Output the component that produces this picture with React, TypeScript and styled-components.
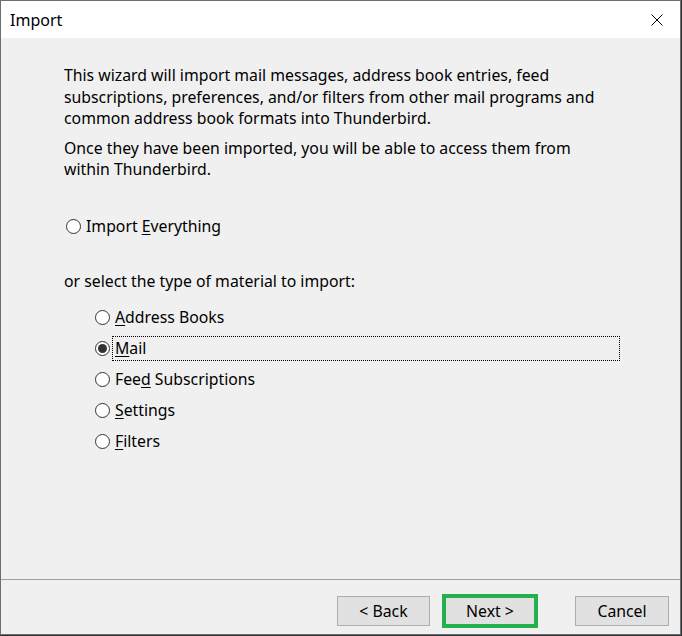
import React from "react";
import styled, { createGlobalStyle } from "styled-components";

const Global = createGlobalStyle`
  html, body { margin: 0; padding: 0; background: #2e3136; }
  body { font-family: "Noto Sans", "Open Sans", sans-serif; }
  * { box-sizing: border-box; }
`;

const Window = styled.div`
  width: 681px;
  height: 635px;
  border: 1px solid #6e6e6e;
  background: #f0f0f0;
  display: flex;
  flex-direction: column;
  color: #000;
  font-size: 15.8px;
`;

const TitleBar = styled.div`
  height: 37px;
  background: #fff;
  display: flex;
  align-items: center;
  justify-content: space-between;
  padding-left: 9px;
  flex-shrink: 0;
`;

const Title = styled.span`
  font-size: 16px;
`;

const CloseButton = styled.div`
  width: 46px;
  height: 37px;
  display: flex;
  align-items: center;
  justify-content: center;
`;

const Content = styled.div`
  flex: 1;
  padding: 27px 60px 0 63px;
  display: flex;
  flex-direction: column;
`;

const Para = styled.p<{ $gap?: number }>`
  margin: 0 0 ${(p) => p.$gap ?? 0}px 0;
  line-height: 21.5px;
`;

const Row = styled.div<{ $indent?: number; $mt?: number }>`
  display: flex;
  align-items: center;
  height: 25px;
  margin-left: ${(p) => p.$indent ?? 0}px;
  margin-top: ${(p) => p.$mt ?? 0}px;
`;

const Radio = styled.span<{ $checked?: boolean }>`
  width: 15px;
  height: 15px;
  border-radius: 50%;
  border: 1px solid #333;
  background: #fff;
  display: flex;
  align-items: center;
  justify-content: center;
  flex-shrink: 0;
  margin-right: 2px;
  &::after {
    content: "";
    display: ${(p) => (p.$checked ? "block" : "none")};
    width: 9px;
    height: 9px;
    border-radius: 50%;
    background: #333;
  }
`;

const RowText = styled.span<{ $focus?: boolean }>`
  display: block;
  height: 25px;
  line-height: 23px;
  padding-left: 2px;
  border: 1px dotted ${(p) => (p.$focus ? "#000" : "transparent")};
  flex: ${(p) => (p.$focus ? 1 : "none")};
  white-space: pre;
`;

const U = styled.span`
  text-decoration: underline;
  text-underline-offset: 2px;
  text-decoration-thickness: 1px;
`;

const List = styled.div`
  display: flex;
  flex-direction: column;
  gap: 6px;
  margin-top: 11px;
`;

const Footer = styled.div`
  height: 55px;
  border-top: 1px solid #a0a0a0;
  display: flex;
  align-items: flex-start;
  justify-content: flex-end;
  padding: 14px 11px 0 0;
  flex-shrink: 0;
`;

const Button = styled.button<{ $highlight?: boolean; $ml?: number; $w?: number }>`
  font-family: inherit;
  font-size: 15.8px;
  color: #000;
  background: #e1e1e1;
  width: ${(p) => (p.$highlight ? 96 : p.$w ?? 93)}px;
  height: ${(p) => (p.$highlight ? 34 : 30)}px;
  margin-top: ${(p) => (p.$highlight ? 0 : 2)}px;
  margin-left: ${(p) => p.$ml ?? 0}px;
  border: ${(p) => (p.$highlight ? "4px solid #22b14c" : "1px solid #adadad")};
  padding: 0;
  display: flex;
  align-items: center;
  justify-content: center;
`;

const materials: { pre: string; key: string; post: string; checked?: boolean }[] = [
  { pre: "", key: "A", post: "ddress Books" },
  { pre: "", key: "M", post: "ail", checked: true },
  { pre: "Fee", key: "d", post: " Subscriptions" },
  { pre: "", key: "S", post: "ettings" },
  { pre: "", key: "F", post: "ilters" },
];

export default function App() {
  return (
    <>
      <Global />
      <Window>
        <TitleBar>
          <Title>Import</Title>
          <CloseButton>
            <svg width="12" height="12" viewBox="0 0 12 12">
              <path d="M0.5 0.5 L11.5 11.5 M11.5 0.5 L0.5 11.5" stroke="#000" strokeWidth="1" />
            </svg>
          </CloseButton>
        </TitleBar>
        <Content>
          <Para $gap={8}>
            This wizard will import mail messages, address book entries, feed
            <br />
            subscriptions, preferences, and/or filters from other mail programs and
            <br />
            common address book formats into Thunderbird.
          </Para>
          <Para>
            Once they have been imported, you will be able to access them from
            <br />
            within Thunderbird.
          </Para>
          <Row $indent={2} $mt={33}>
            <Radio />
            <RowText>
              Import <U>E</U>verything
            </RowText>
          </Row>
          <Row $mt={30}>or select the type of material to import:</Row>
          <List>
            {materials.map((m) => (
              <Row key={m.post} $indent={31}>
                <Radio $checked={m.checked} />
                <RowText $focus={m.checked}>
                  {m.pre}
                  <U>{m.key}</U>
                  {m.post}
                </RowText>
              </Row>
            ))}
          </List>
        </Content>
        <Footer>
          <Button>&lt; Back</Button>
          <Button $highlight $ml={12}>Next &gt;</Button>
          <Button $ml={37} $w={94}>Cancel</Button>
        </Footer>
      </Window>
    </>
  );
}
